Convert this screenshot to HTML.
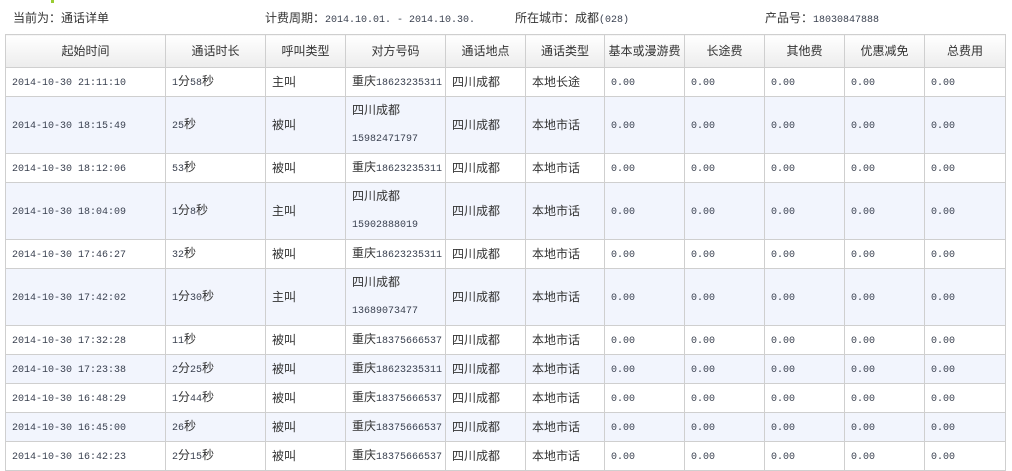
<!DOCTYPE html>
<html><head><meta charset="utf-8"><style>
body{margin:0;width:1012px;height:467px;overflow:hidden;background:#fff;font-family:"Liberation Sans","Noto Sans CJK SC",sans-serif;font-size:12px;color:#333}
.top{position:absolute;top:10px;font-size:12px;color:#333;white-space:nowrap;line-height:16px}
.n{font-family:"Liberation Mono",monospace;font-size:10px;color:#3a4150}
.mark{position:absolute;left:51px;top:0;width:3px;height:3px;background:#9c3}
table{position:absolute;left:5px;top:34px;border-collapse:collapse;table-layout:fixed;width:1000px}
td,th{border:1px solid #cfcfcf;padding:0 0 0 6px;text-align:left;white-space:nowrap;overflow:hidden;font-weight:normal;line-height:14px;box-sizing:border-box}
tr{height:29px}
tr.h{height:33px}
tr.t{height:57px}
th{text-align:center;padding:0;background:linear-gradient(#fff,#ececec);font-size:12px;color:#333}
tr.b td{background:#f2f5fd}
td.two{line-height:27px}
</style></head><body>
<div class="mark"></div>
<div class="top" style="left:13px">当前为：通话详单</div>
<div class="top" style="left:265px">计费周期：<span class="n">2014.10.01. - 2014.10.30.</span></div>
<div class="top" style="left:515px">所在城市：成都<span class="n">(028)</span></div>
<div class="top" style="left:765px">产品号：<span class="n">18030847888</span></div>
<table>
<colgroup><col style="width:160px"><col style="width:100px"><col style="width:80px"><col style="width:100px"><col style="width:80px"><col style="width:79px"><col style="width:80px"><col style="width:80px"><col style="width:80px"><col style="width:80px"><col style="width:81px"></colgroup>
<tr class="h"><th>起始时间</th><th>通话时长</th><th>呼叫类型</th><th>对方号码</th><th>通话地点</th><th>通话类型</th><th>基本或漫游费</th><th>长途费</th><th>其他费</th><th>优惠减免</th><th>总费用</th></tr>
<tr><td><span class="n">2014-10-30 21:11:10</span></td><td><span class="n">1</span>分<span class="n">58</span>秒</td><td>主叫</td><td>重庆<span class="n">18623235311</span></td><td>四川成都</td><td>本地长途</td><td><span class="n">0.00</span></td><td><span class="n">0.00</span></td><td><span class="n">0.00</span></td><td><span class="n">0.00</span></td><td><span class="n">0.00</span></td></tr>
<tr class="b t"><td><span class="n">2014-10-30 18:15:49</span></td><td><span class="n">25</span>秒</td><td>被叫</td><td class="two">四川成都<br><span class="n">15982471797</span></td><td>四川成都</td><td>本地市话</td><td><span class="n">0.00</span></td><td><span class="n">0.00</span></td><td><span class="n">0.00</span></td><td><span class="n">0.00</span></td><td><span class="n">0.00</span></td></tr>
<tr><td><span class="n">2014-10-30 18:12:06</span></td><td><span class="n">53</span>秒</td><td>被叫</td><td>重庆<span class="n">18623235311</span></td><td>四川成都</td><td>本地市话</td><td><span class="n">0.00</span></td><td><span class="n">0.00</span></td><td><span class="n">0.00</span></td><td><span class="n">0.00</span></td><td><span class="n">0.00</span></td></tr>
<tr class="b t"><td><span class="n">2014-10-30 18:04:09</span></td><td><span class="n">1</span>分<span class="n">8</span>秒</td><td>主叫</td><td class="two">四川成都<br><span class="n">15902888019</span></td><td>四川成都</td><td>本地市话</td><td><span class="n">0.00</span></td><td><span class="n">0.00</span></td><td><span class="n">0.00</span></td><td><span class="n">0.00</span></td><td><span class="n">0.00</span></td></tr>
<tr><td><span class="n">2014-10-30 17:46:27</span></td><td><span class="n">32</span>秒</td><td>被叫</td><td>重庆<span class="n">18623235311</span></td><td>四川成都</td><td>本地市话</td><td><span class="n">0.00</span></td><td><span class="n">0.00</span></td><td><span class="n">0.00</span></td><td><span class="n">0.00</span></td><td><span class="n">0.00</span></td></tr>
<tr class="b t"><td><span class="n">2014-10-30 17:42:02</span></td><td><span class="n">1</span>分<span class="n">30</span>秒</td><td>主叫</td><td class="two">四川成都<br><span class="n">13689073477</span></td><td>四川成都</td><td>本地市话</td><td><span class="n">0.00</span></td><td><span class="n">0.00</span></td><td><span class="n">0.00</span></td><td><span class="n">0.00</span></td><td><span class="n">0.00</span></td></tr>
<tr><td><span class="n">2014-10-30 17:32:28</span></td><td><span class="n">11</span>秒</td><td>被叫</td><td>重庆<span class="n">18375666537</span></td><td>四川成都</td><td>本地市话</td><td><span class="n">0.00</span></td><td><span class="n">0.00</span></td><td><span class="n">0.00</span></td><td><span class="n">0.00</span></td><td><span class="n">0.00</span></td></tr>
<tr class="b"><td><span class="n">2014-10-30 17:23:38</span></td><td><span class="n">2</span>分<span class="n">25</span>秒</td><td>被叫</td><td>重庆<span class="n">18623235311</span></td><td>四川成都</td><td>本地市话</td><td><span class="n">0.00</span></td><td><span class="n">0.00</span></td><td><span class="n">0.00</span></td><td><span class="n">0.00</span></td><td><span class="n">0.00</span></td></tr>
<tr><td><span class="n">2014-10-30 16:48:29</span></td><td><span class="n">1</span>分<span class="n">44</span>秒</td><td>被叫</td><td>重庆<span class="n">18375666537</span></td><td>四川成都</td><td>本地市话</td><td><span class="n">0.00</span></td><td><span class="n">0.00</span></td><td><span class="n">0.00</span></td><td><span class="n">0.00</span></td><td><span class="n">0.00</span></td></tr>
<tr class="b"><td><span class="n">2014-10-30 16:45:00</span></td><td><span class="n">26</span>秒</td><td>被叫</td><td>重庆<span class="n">18375666537</span></td><td>四川成都</td><td>本地市话</td><td><span class="n">0.00</span></td><td><span class="n">0.00</span></td><td><span class="n">0.00</span></td><td><span class="n">0.00</span></td><td><span class="n">0.00</span></td></tr>
<tr><td><span class="n">2014-10-30 16:42:23</span></td><td><span class="n">2</span>分<span class="n">15</span>秒</td><td>被叫</td><td>重庆<span class="n">18375666537</span></td><td>四川成都</td><td>本地市话</td><td><span class="n">0.00</span></td><td><span class="n">0.00</span></td><td><span class="n">0.00</span></td><td><span class="n">0.00</span></td><td><span class="n">0.00</span></td></tr>
</table>
</body></html>
